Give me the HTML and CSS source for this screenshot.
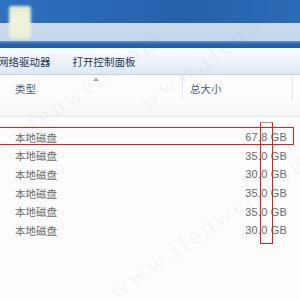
FILE: index.html
```html
<!DOCTYPE html>
<html lang="zh-CN">
<head>
    <meta charset="UTF-8">
    <title>计算机</title>
    <link rel="stylesheet" href="styles.css">
</head>
<body>
    <div class="janela">
        <div class="barra-titulo">
            <div class="icone-pasta"></div>
        </div>
        <div class="barra-endereco"></div>
        <div class="faixa"></div>

        <div class="toolbar">
            <span class="item item-cortado">网络驱动器</span>
            <span class="item">打开控制面板</span>
        </div>

        <div class="cabecalho">
            <div class="col col-tipo">类型</div>
            <div class="col col-total">总大小</div>
            <div class="col col-resto"></div>
            <span class="seta"></span>
        </div>

        <div class="grupo"></div>

        <div class="lista">
            <div class="linha"><span class="tipo">本地磁盘</span><span class="tamanho">67.8 GB</span></div>
            <div class="linha"><span class="tipo">本地磁盘</span><span class="tamanho">35.0 GB</span></div>
            <div class="linha"><span class="tipo">本地磁盘</span><span class="tamanho">30.0 GB</span></div>
            <div class="linha"><span class="tipo">本地磁盘</span><span class="tamanho">35.0 GB</span></div>
            <div class="linha"><span class="tipo">本地磁盘</span><span class="tamanho">35.0 GB</span></div>
            <div class="linha"><span class="tipo">本地磁盘</span><span class="tamanho">30.0 GB</span></div>
        </div>

        <!-- marcas em vermelho por cima da lista -->
        <div class="marca-linha"></div>
        <div class="marca-coluna"></div>

        <!-- marca d'agua -->
        <div class="agua agua-1">www.ifenwen.com</div>
        <div class="agua agua-2">www.ifenwen.com</div>
        <div class="agua agua-3">www.ifenwen.com</div>
    </div>
</body>
</html>
```

FILE: styles.css
```css
/* Geral */
* {
    margin: 0;
    padding: 0;
    box-sizing: border-box;
}

body {
    background-color: #fdfdfd;
    font-family: 'Noto Sans CJK SC', 'Noto Sans', sans-serif;
}

.janela {
    position: relative;
    width: 300px;
    height: 300px;
    overflow: hidden;
    background-color: #fdfdfd;
}

/* Barra de titulo */
.barra-titulo {
    height: 23px;
    background: linear-gradient(to right, #2f70c0, #2461ad 60%, #2a6ab6);
    position: relative;
}

.icone-pasta {
    position: absolute;
    left: 9px;
    top: 6px;
    width: 22px;
    height: 33px;
    border-radius: 3px;
    background: linear-gradient(to bottom, #e4ecd4, #f1f4dc 50%, #e9efd6);
    filter: blur(1.5px);
    z-index: 2;
}

.barra-endereco {
    height: 18px;
    background: linear-gradient(to bottom, #cadaee, #c3d6ec);
}

.faixa {
    height: 7px;
    background: linear-gradient(to bottom, #6c93c6, #2a67b2 40%, #1f5ca6);
}

/* Barra de ferramentas */
.toolbar {
    height: 27px;
    display: flex;
    align-items: center;
    gap: 22px;
    background: linear-gradient(to bottom, #fafcfe, #eef3fa 50%, #dde8f4);
    border-bottom: 1px solid #c6d3e3;
}

.item {
    font-size: 10.5px;
    color: #1e3654;
    padding-top: 1px;
}

.item-cortado {
    margin-left: -2px;
}

/* Cabecalho das colunas */
.cabecalho {
    position: relative;
    display: flex;
    height: 25px;
    background-color: #fdfdfd;
}

.col {
    font-size: 10.5px;
    color: #4c5f78;
    line-height: 25px;
    padding-top: 1px;
}

.col-tipo {
    width: 183px;
    padding-left: 15px;
    border-right: 1px solid #e3e8ef;
}

.col-total {
    width: 110px;
    padding-left: 7px;
    border-right: 1px solid #e3e8ef;
}

.col-resto {
    flex: 1;
}

.seta {
    position: absolute;
    left: 93px;
    top: 3px;
    width: 0;
    height: 0;
    border-left: 3px solid transparent;
    border-right: 3px solid transparent;
    border-bottom: 3px solid #8da2bd;
}

.grupo {
    height: 17px;
    background: linear-gradient(to bottom, #fdfdfd, #f6f6f6);
    border-bottom: 1px solid #ececec;
}

/* Lista de discos */
.lista {
    padding-top: 11px;
}

.linha {
    display: flex;
    height: 18.6px;
    align-items: center;
    font-size: 10.5px;
    color: #6a6a6a;
}

.tipo {
    width: 200px;
    padding-left: 15px;
}

.tamanho {
    width: 87px;
    text-align: right;
    font-family: 'Liberation Sans', 'Noto Sans', sans-serif;
    font-size: 11px;
    letter-spacing: 0.2px;
}

/* Marcas vermelhas */
.marca-linha {
    position: absolute;
    left: -2px;
    top: 127px;
    width: 296px;
    height: 18px;
    border: 1.5px solid #e41c1c;
}

.marca-coluna {
    position: absolute;
    left: 260px;
    top: 122px;
    width: 13px;
    height: 122px;
    border: 1.5px solid #e41c1c;
    border-top-color: #f08080;
}

/* Marca d'agua */
.agua {
    position: absolute;
    font-family: 'Liberation Serif', serif;
    font-size: 26px;
    letter-spacing: 3px;
    color: rgba(120, 120, 120, 0.08);
    transform: rotate(-35deg);
    white-space: nowrap;
}

.agua-1 {
    left: -60px;
    top: 90px;
}

.agua-2 {
    left: 120px;
    top: 20px;
}

.agua-3 {
    left: 90px;
    top: 210px;
}
```
